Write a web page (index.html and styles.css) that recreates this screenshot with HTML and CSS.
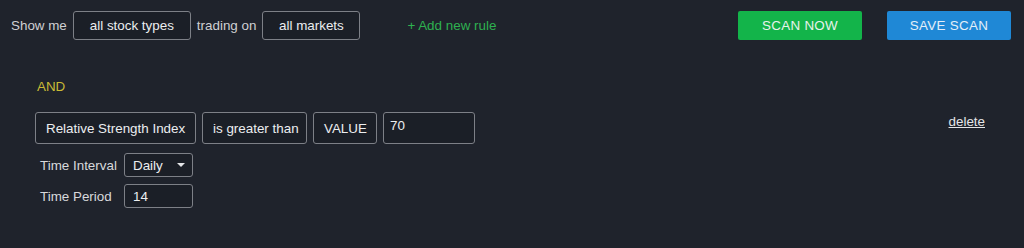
FILE: index.html
```html
<!DOCTYPE html>
<html>
<head>
<meta charset="utf-8">
<link rel="stylesheet" href="styles.css">
</head>
<body>
<div class="page">
  <div class="topbar">
    <span class="label">Show me</span>
    <span class="box pill stock">all stock types</span>
    <span class="label">trading on</span>
    <span class="box pill markets">all markets</span>
    <span class="add">+ Add new rule</span>
    <span class="spacer"></span>
    <button class="btn scan">SCAN NOW</button>
    <button class="btn save">SAVE SCAN</button>
  </div>
  <div class="rules">
    <div class="and">AND</div>
    <div class="rule-row">
      <div class="rule-fields">
        <span class="box field rsi">Relative Strength Index</span>
        <span class="box field cmp">is greater than</span>
        <span class="box field val">VALUE</span>
        <span class="box input num">70</span>
      </div>
      <span class="delete">delete</span>
    </div>
    <div class="params">
      <div class="param">
        <span class="plabel">Time Interval</span>
        <span class="box small select">Daily<span class="caret"></span></span>
      </div>
      <div class="param">
        <span class="plabel">Time Period</span>
        <span class="box small">14</span>
      </div>
    </div>
  </div>
</div>
</body>
</html>
```
FILE: styles.css
```css
* { box-sizing: border-box; }
html, body {
  margin: 0;
  padding: 0;
  background: #1f232c;
  font-family: "Liberation Sans", Arial, sans-serif;
  font-size: 13.4px;
  color: #d4d5d8;
}
.page {
  width: 1024px;
  height: 248px;
}
.topbar {
  display: flex;
  align-items: center;
  padding: 11px 13px 0 11px;
  height: 40px;
  white-space: nowrap;
}
.label {
  color: #cfd0d3;
  margin-right: 6px;
}
.box {
  display: inline-flex;
  align-items: center;
  border: 1px solid #7d8087;
  border-radius: 3px;
  background: #1b1f27;
  color: #eceef0;
  white-space: nowrap;
}
.pill {
  height: 29px;
  justify-content: center;
  margin-right: 6px;
}
.stock { width: 118px; }
.markets { width: 98px; }
.add {
  color: #2eb150;
  margin-left: 41px;
}
.spacer { flex: 1; }
.btn {
  width: 124px;
  height: 29px;
  border: none;
  border-radius: 2px;
  color: #e8f2ec;
  font-family: "Liberation Sans", Arial, sans-serif;
  font-size: 13.4px;
  letter-spacing: 0.3px;
  padding: 0;
}
.scan { background: #13b44a; margin-right: 25px; }
.save { background: #1f88d6; color: #e3eef8; }
.rules {
  padding: 39px 39px 0 35px;
}
.and {
  color: #c9bb35;
  padding-left: 2px;
  line-height: 15px;
  height: 15px;
}
.rule-row {
  display: flex;
  justify-content: space-between;
  align-items: flex-start;
  margin-top: 18px;
}
.rule-fields {
  display: flex;
  gap: 6px;
}
.field {
  height: 32px;
  padding: 0 10px;
}
.rsi { width: 161px; }
.cmp { width: 105px; }
.val { width: 64px; }
.num {
  width: 92px;
  height: 32px;
  align-items: flex-start;
  padding: 5px 0 0 6px;
}
.delete {
  color: #e4e5e8;
  text-decoration: underline;
  margin-top: 2px;
}
.params {
  padding-left: 5px;
  margin-top: 9px;
  display: flex;
  flex-direction: column;
  gap: 7px;
}
.param {
  display: flex;
  align-items: center;
}
.plabel {
  width: 84px;
  color: #d8d9dc;
}
.small {
  width: 69px;
  height: 24px;
  padding: 0 8px;
  justify-content: space-between;
}
.caret {
  width: 0;
  height: 0;
  border-left: 4px solid transparent;
  border-right: 4px solid transparent;
  border-top: 4px solid #e4e5e8;
  margin-right: -1px;
}
```
